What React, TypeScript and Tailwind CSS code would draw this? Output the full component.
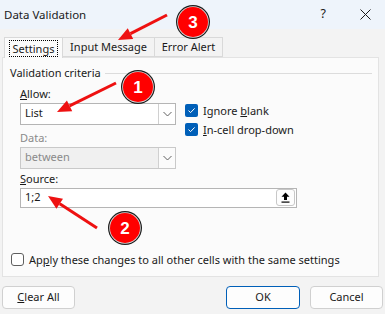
import React from "react";

const Check = (props: { on: boolean }) =>
  props.on ? (
    <span className="flex h-[13px] w-[13px] items-center justify-center rounded-[2px] bg-[#005fb8]">
      <svg width="9" height="9" viewBox="0 0 9 9">
        <path d="M1.5 4.6 L3.6 6.6 L7.6 2.4" fill="none" stroke="#ffffff" strokeWidth="1" />
      </svg>
    </span>
  ) : (
    <span className="h-[13px] w-[13px] rounded-[3px] border border-[#5f5f5f] bg-white"></span>
  );

const Chevron = () => (
  <svg width="9" height="6" viewBox="0 0 9 6">
    <path d="M0.5 1 L4.5 5 L8.5 1" fill="none" stroke="#606060" strokeWidth="1" />
  </svg>
);

const Callout = (props: { cx: number; cy: number; n: string }) => (
  <g>
    <circle cx={props.cx} cy={props.cy} r="17" fill="#1a1a1a" />
    <circle cx={props.cx} cy={props.cy} r="15.8" fill="#d9d9d9" />
    <circle cx={props.cx} cy={props.cy} r="15" fill="#ff0000" />
    <text
      x={props.cx}
      y={props.cy + 6}
      textAnchor="middle"
      fontSize="17"
      fontWeight="700"
      fill="#ffffff"
      fontFamily="Liberation Sans, Arial, sans-serif"
    >
      {props.n}
    </text>
  </g>
);

const Arrow = (props: { x1: number; y1: number; x2: number; y2: number }) => {
  const dx = props.x2 - props.x1;
  const dy = props.y2 - props.y1;
  const len = Math.sqrt(dx * dx + dy * dy);
  const ux = dx / len;
  const uy = dy / len;
  const hl = 14;
  const hw = 6;
  const bx = props.x2 - ux * hl;
  const by = props.y2 - uy * hl;
  return (
    <g>
      <line x1={props.x1} y1={props.y1} x2={bx} y2={by} stroke="#ee1111" strokeWidth="3" />
      <polygon
        points={`${props.x2},${props.y2} ${bx - uy * hw},${by + ux * hw} ${bx + uy * hw},${by - ux * hw}`}
        fill="#ee1111"
      />
    </g>
  );
};

export default function App() {
  return (
    <div
      className="relative h-[314px] w-[385px] overflow-hidden bg-[#f3f3f3] text-[11px] text-[#1a1a1a]"
      style={{ fontFamily: '"Noto Sans", "Open Sans", sans-serif' }}
    >
      {/* Title bar */}
      <header className="flex h-[29px] items-center justify-between bg-[#eef4fb] pl-[4px] pr-[14px]">
        <span className="text-[11.5px]">Data Validation</span>
        <div className="flex items-center gap-[34px]">
          <span className="text-[12.5px]">?</span>
          <svg width="11" height="11" viewBox="0 0 11 11">
            <path d="M0.5 0.5 L10.5 10.5 M10.5 0.5 L0.5 10.5" stroke="#1a1a1a" strokeWidth="1" />
          </svg>
        </div>
      </header>

      {/* Tabs */}
      <div className="mt-[7px] flex h-[21px] items-end pl-[4px]">
        <div className="relative z-10 -mb-px flex h-[21px] w-[59px] items-center justify-center border border-b-0 border-[#d9d9d9] bg-[#fbfbfb]">
          <span className="border border-dotted border-black px-[3px] leading-[15px]">Settings</span>
        </div>
        <div className="flex h-[20px] w-[92px] items-center justify-center border border-l-0 border-[#d9d9d9] bg-[#f3f3f3]">
          Input Message
        </div>
        <div className="flex h-[20px] w-[68px] items-center justify-center border border-l-0 border-[#d9d9d9] bg-[#f3f3f3]">
          Error Alert
        </div>
      </div>

      {/* Panel */}
      <main className="mx-[2px] flex h-[220px] w-[377px] flex-col border border-[#e3e3e3] bg-[#fbfbfb] pl-[7px] pr-[6px] pt-[7px]">
        <div className="flex items-center gap-[4px]">
          <span>Validation criteria</span>
          <div className="h-px flex-1 bg-[#dcdcdc]"></div>
        </div>

        <div className="flex pl-[10px]">
          <div className="flex w-[156px] flex-col">
            <span className="mt-[3px] leading-[18px]">
              <u>A</u>llow:
            </span>
            <div className="flex h-[22px] items-center border border-[#b5b5b5] bg-white pl-[4px]">
              <span className="flex-1">List</span>
              <div className="flex h-full w-[17px] items-center justify-center border-l border-[#d0d0d0]">
                <Chevron />
              </div>
            </div>
            <span className="mt-[4px] leading-[18px] text-[#8a8a8a]">Data:</span>
            <div className="flex h-[22px] items-center border border-[#c9c9c9] bg-[#f0f0f0] pl-[4px] text-[#8a8a8a]">
              <span className="flex-1">between</span>
              <div className="flex h-full w-[17px] items-center justify-center border-l border-[#d0d0d0] bg-[#fbfbfb]">
                <Chevron />
              </div>
            </div>
          </div>
          <div className="ml-[9px] mt-[22px] flex flex-col gap-[6px]">
            <label className="flex items-center gap-[5px] leading-[13px]">
              <Check on />
              <span>
                Ignore <u>b</u>lank
              </span>
            </label>
            <label className="flex items-center gap-[5px] leading-[13px]">
              <Check on />
              <span>
                <u>I</u>n-cell drop-down
              </span>
            </label>
          </div>
        </div>

        <div className="flex w-[287px] flex-col pl-[10px]">
          <span className="mt-[1px] leading-[18px]">
            <u>S</u>ource:
          </span>
          <div className="flex h-[20px] items-center border border-[#b5b5b5] bg-white pl-[4px] pr-[1px]">
            <span className="flex-1">1;2</span>
            <div className="flex h-[17px] w-[19px] items-center justify-center rounded-[3px] border border-[#c8c8c8] bg-[#fdfdfd]">
              <svg width="9" height="11" viewBox="0 0 9 11">
                <path d="M4.5 0.5 L8.5 4.8 L6 4.8 L6 8 L3 8 L3 4.8 L0.5 4.8 Z" fill="#000" />
                <rect x="0.5" y="9.5" width="8" height="1.2" fill="#000" />
              </svg>
            </div>
          </div>
        </div>

        <label className="mt-auto mb-[8px] flex items-center gap-[5px] pl-[1px]">
          <Check on={false} />
          <span>
            Ap<u>p</u>ly these changes to all other cells with the same settings
          </span>
        </label>
      </main>

      {/* Footer */}
      <footer className="mt-[9px] flex px-[2px]">
        <button className="h-[23px] w-[73px] rounded-[4px] border border-[#d0d0d0] bg-[#fdfdfd]">
          <u>C</u>lear All
        </button>
        <button className="ml-auto h-[23px] w-[74px] rounded-[4px] border border-[#005fb8] bg-[#fdfdfd]">OK</button>
        <button className="ml-[10px] h-[23px] w-[73px] rounded-[4px] border border-[#d0d0d0] bg-[#fdfdfd]">
          Cancel
        </button>
      </footer>

      {/* Annotations */}
      <svg className="pointer-events-none absolute inset-0" width="385" height="314" viewBox="0 0 385 314">
        <Arrow x1={167} y1={15} x2={118} y2={40} />
        <Arrow x1={116} y1={83} x2={57} y2={112} />
        <Arrow x1={97} y1={228} x2={48} y2={196} />
        <Callout cx={193} cy={22} n="3" />
        <Callout cx={138} cy={87} n="1" />
        <Callout cx={125} cy={228} n="2" />
      </svg>
    </div>
  );
}
